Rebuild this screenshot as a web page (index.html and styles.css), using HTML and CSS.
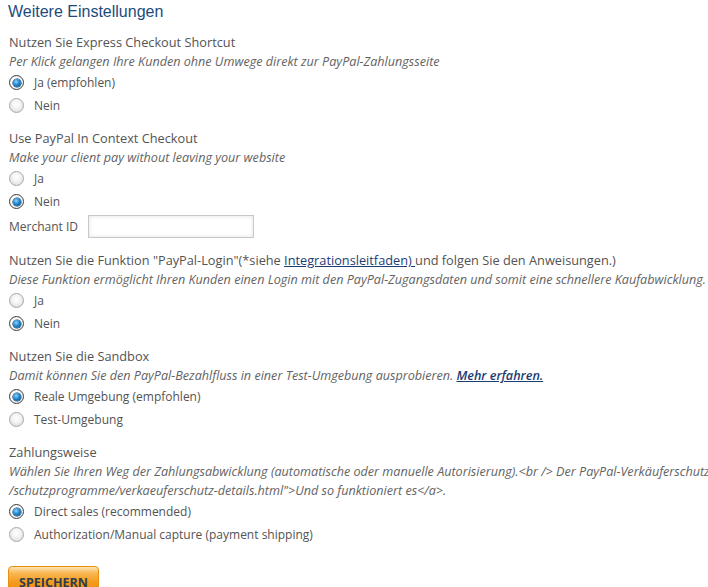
FILE: index.html
```html
<!DOCTYPE html>
<html lang="de">
<head>
<meta charset="utf-8">
<title>Weitere Einstellungen</title>
<link rel="stylesheet" href="styles.css">
</head>
<body>
<div class="page">
  <h2 class="title">Weitere Einstellungen</h2>

  <div class="section">
    <div class="label">Nutzen Sie Express Checkout Shortcut</div>
    <div class="desc">Per Klick gelangen Ihre Kunden ohne Umwege direkt zur PayPal-Zahlungsseite</div>
    <label class="opt"><input type="radio" name="ecs" checked><span>Ja (empfohlen)</span></label>
    <label class="opt"><input type="radio" name="ecs"><span>Nein</span></label>
  </div>

  <div class="section">
    <div class="label">Use PayPal In Context Checkout</div>
    <div class="desc">Make your client pay without leaving your website</div>
    <label class="opt"><input type="radio" name="ctx"><span>Ja</span></label>
    <label class="opt"><input type="radio" name="ctx" checked><span>Nein</span></label>
    <div class="field"><span class="field-label">Merchant ID</span><input type="text" class="text-input"></div>
  </div>

  <div class="section">
    <div class="label">Nutzen Sie die Funktion "PayPal-Login"(*siehe <a href="#">Integrationsleitfaden) </a>und folgen Sie den Anweisungen.)</div>
    <div class="desc">Diese Funktion ermöglicht Ihren Kunden einen Login mit den PayPal-Zugangsdaten und somit eine schnellere Kaufabwicklung.</div>
    <label class="opt"><input type="radio" name="login"><span>Ja</span></label>
    <label class="opt"><input type="radio" name="login" checked><span>Nein</span></label>
  </div>

  <div class="section">
    <div class="label">Nutzen Sie die Sandbox</div>
    <div class="desc">Damit können Sie den PayPal-Bezahlfluss in einer Test-Umgebung ausprobieren. <a href="#">Mehr erfahren.</a></div>
    <label class="opt"><input type="radio" name="sandbox" checked><span>Reale Umgebung (empfohlen)</span></label>
    <label class="opt"><input type="radio" name="sandbox"><span>Test-Umgebung</span></label>
  </div>

  <div class="section">
    <div class="label">Zahlungsweise</div>
    <div class="desc">Wählen Sie Ihren Weg der Zahlungsabwicklung (automatische oder manuelle Autorisierung).&lt;br /&gt; Der PayPal-Verkäuferschutz</div>
    <div class="desc">/schutzprogramme/verkaeuferschutz-details.html"&gt;Und so funktioniert es&lt;/a&gt;.</div>
    <label class="opt"><input type="radio" name="mode" checked><span>Direct sales (recommended)</span></label>
    <label class="opt"><input type="radio" name="mode"><span>Authorization/Manual capture (payment shipping)</span></label>
  </div>

  <button class="save" type="button">SPEICHERN</button>
</div>
</body>
</html>
```

FILE: styles.css
```css
html, body {
  margin: 0;
  padding: 0;
  background: #ffffff;
  overflow: hidden;
}

.page {
  width: 760px;
  padding: 3px 0 0 8px;
  font-family: "Open Sans", "DejaVu Sans", sans-serif;
  font-size: 12.75px;
  color: #535353;
}

.title {
  margin: 0;
  font-family: "Liberation Sans", Arial, sans-serif;
  font-size: 16px;
  font-weight: normal;
  line-height: 18px;
  color: #1e4a7c;
}

.section {
  margin-top: 12px;
}

.label {
  line-height: 19px;
  padding-left: 1px;
  white-space: nowrap;
}

.desc {
  line-height: 19px;
  font-size: 12.6px;
  font-style: italic;
  color: #636363;
  padding-left: 1px;
  white-space: nowrap;
}

a {
  color: #1b3d73;
  text-decoration: underline;
}

.desc a {
  font-weight: 600;
}

.opt {
  display: flex;
  align-items: center;
  height: 23px;
  font-size: 12px;
}

.opt span {
  margin-left: 10px;
}

.opt input {
  -webkit-appearance: none;
  appearance: none;
  margin: 0 0 0 1px;
  width: 15px;
  height: 15px;
  border-radius: 50%;
  border: 1px solid #a9a9a9;
  background: radial-gradient(circle at 50% 40%, #ffffff 0%, #f2f2f2 45%, #d2d2d2 100%);
  box-sizing: border-box;
  position: relative;
}

.opt input:checked {
  border-color: #3e3e3e;
  background: radial-gradient(circle at 50% 50%, #ffffff 55%, #cfcfcf 100%);
}

.opt input:checked::after {
  content: "";
  position: absolute;
  left: 2.5px;
  top: 2.5px;
  width: 8px;
  height: 8px;
  border-radius: 50%;
  background: radial-gradient(circle at 40% 35%, #8fd3ff 0%, #1f86cc 45%, #0b4a86 100%);
  box-shadow: 0 0 0 0.6px #0d3a66;
}

.field {
  display: flex;
  align-items: center;
  height: 26px;
  padding-left: 1px;
  font-size: 12px;
}

.field-label {
  width: 79px;
}

.text-input {
  width: 166px;
  height: 23px;
  box-sizing: border-box;
  border: 1px solid #c8c8c8;
  background: #ffffff;
  box-shadow: inset 0 0 4px #e2e2e2;
  margin: 0;
  padding: 0 4px;
}

.save {
  display: block;
  margin-top: 20px;
  width: 91px;
  height: 28px;
  padding: 5px 0 0;
  border: 1px solid #e7900e;
  border-radius: 4px 4px 0 0;
  background: linear-gradient(#fde2b5 0%, #f9b550 25%, #f39a1c 60%, #f08c0a 100%);
  font-family: "Open Sans", "DejaVu Sans", sans-serif;
  font-size: 12.5px;
  font-weight: bold;
  color: #2f3d4d;
  line-height: 20px;
}
```
